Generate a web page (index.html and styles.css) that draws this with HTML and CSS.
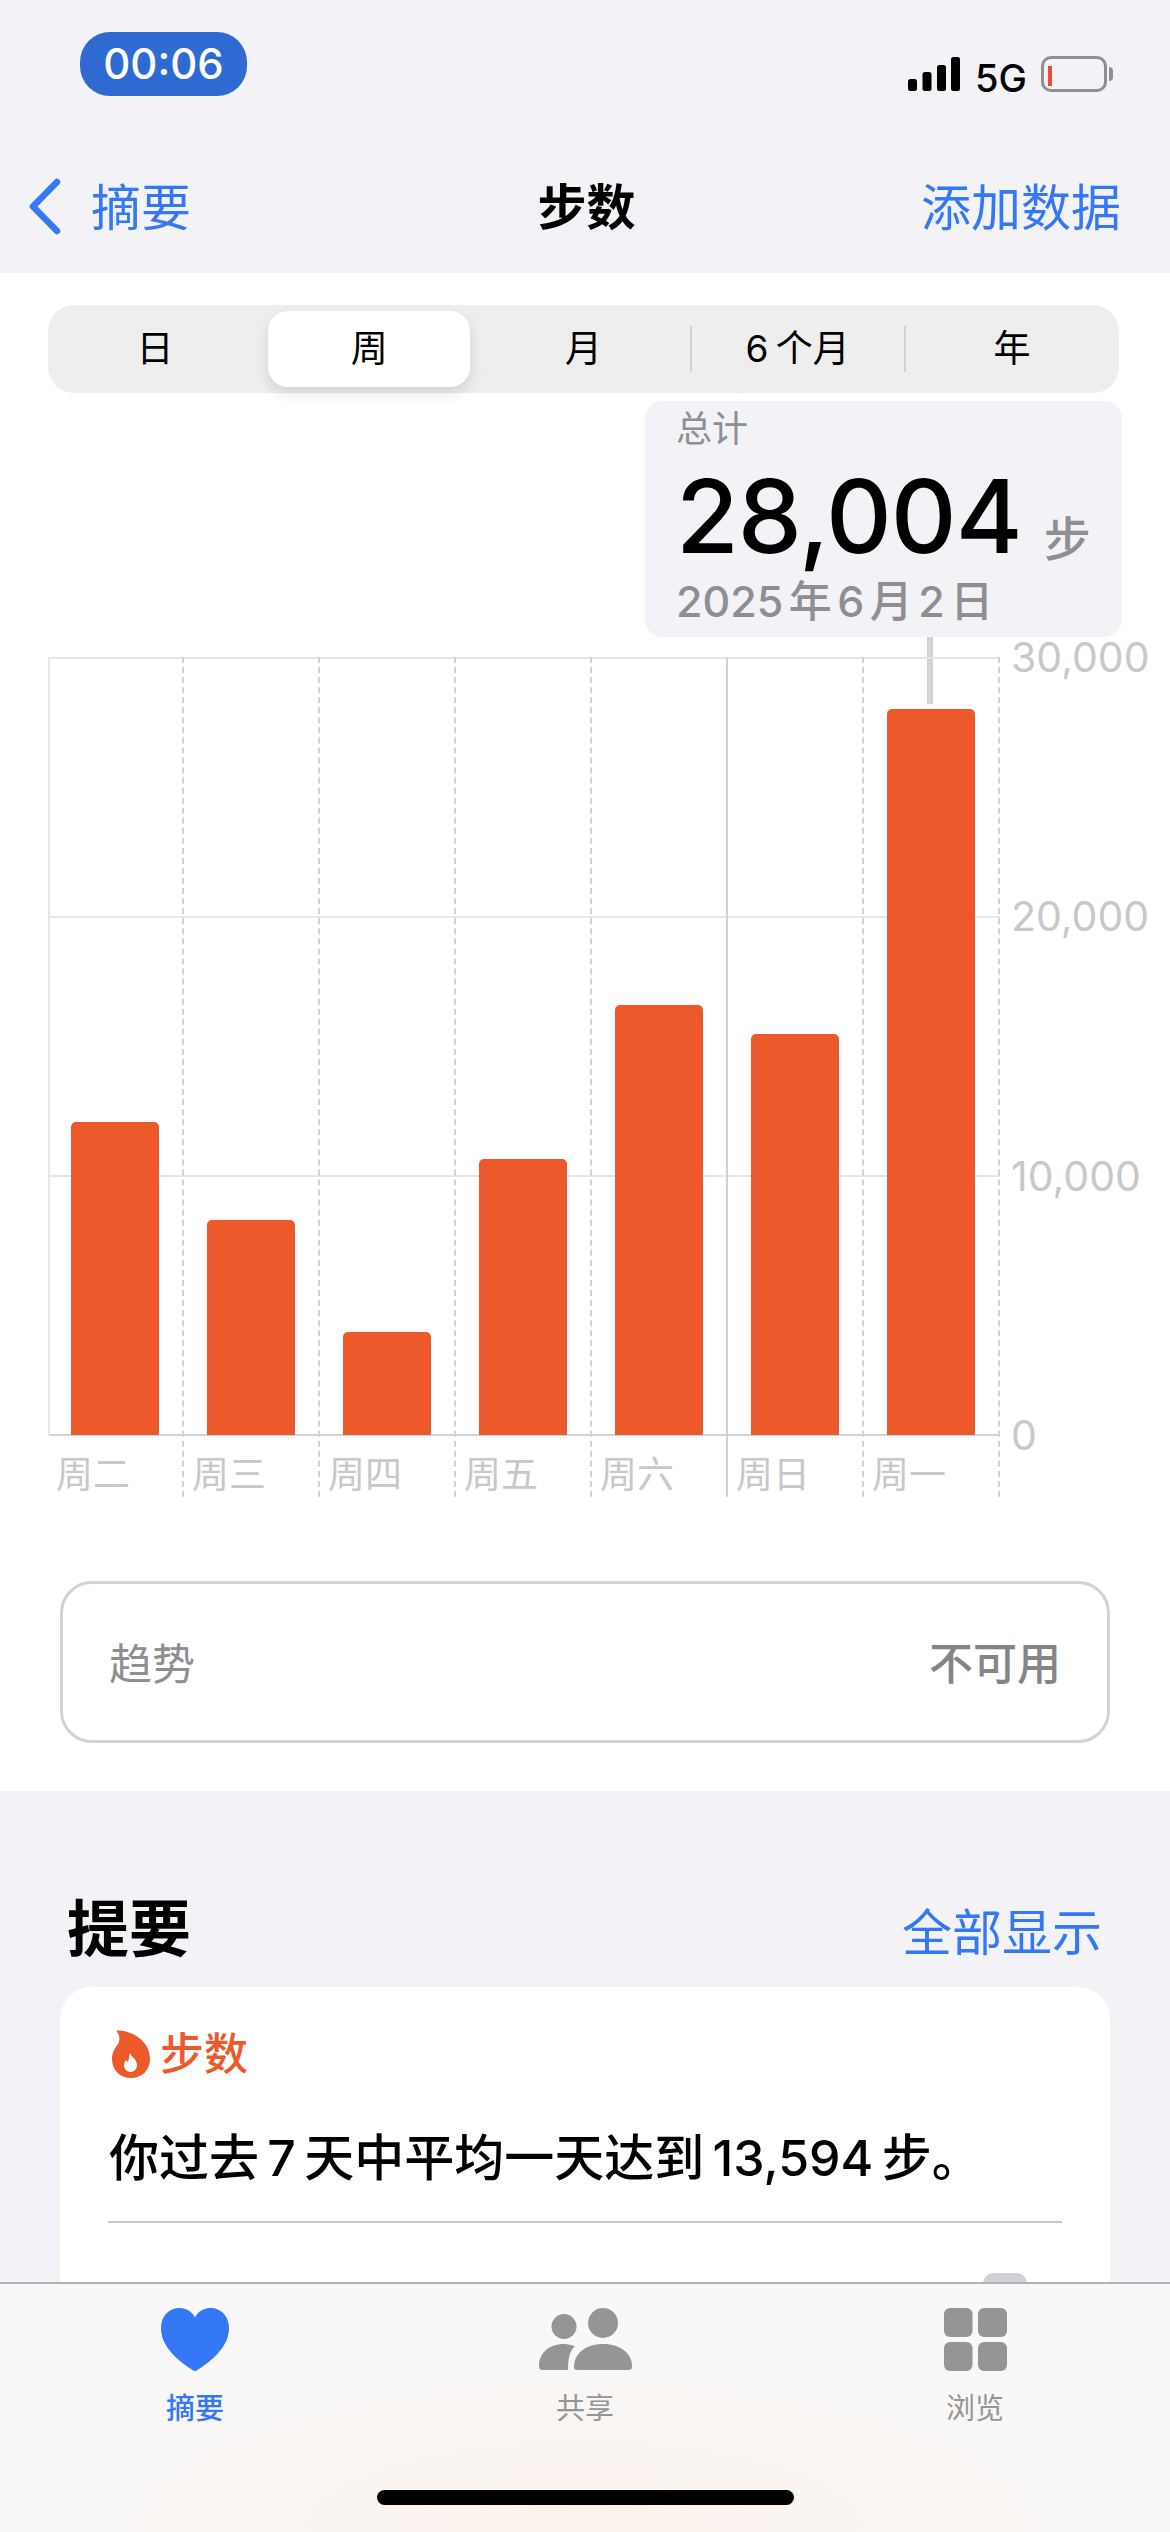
FILE: index.html
```html
<!DOCTYPE html>
<html lang="zh-CN">
<head>
<meta charset="UTF-8" />
<meta name="viewport" content="width=device-width, initial-scale=1" />
<title>步数</title>
<link rel="stylesheet" href="styles.css">
</head>
<body>
<header class="top">
  <div class="status">
    <div class="time-pill">00:06</div>
    <div class="status-right">
      <svg class="signal" width="52" height="34" viewBox="0 0 52 34">
        <rect x="0" y="22" width="9" height="12" rx="2.5" />
        <rect x="14.5" y="15" width="9" height="19" rx="2.5" />
        <rect x="29" y="8" width="9" height="26" rx="2.5" />
        <rect x="43" y="0" width="9" height="34" rx="2.5" />
      </svg>
      <span class="network">5G</span>
      <div class="battery"><div class="battery-level"></div></div>
    </div>
  </div>
  <nav class="nav">
    <a class="nav-back">
      <svg width="33" height="57" viewBox="0 0 33 57"><polyline points="29,4 5,28.5 29,53" fill="none" stroke="#3478f6" stroke-width="6.5" stroke-linecap="round" stroke-linejoin="round" /></svg>
      <span>摘要</span>
    </a>
    <div class="nav-title">步数</div>
    <a class="nav-action">添加数据</a>
  </nav>
</header>

<main class="detail">
  <div class="segments">
    <div class="segment">日</div>
    <div class="segment selected">周</div>
    <div class="segment">月</div>
    <div class="segment divided">6 个月</div>
    <div class="segment divided">年</div>
  </div>

  <div class="callout">
    <div class="callout-label">总计</div>
    <div class="callout-value">28,004<span class="callout-unit">步</span></div>
    <div class="callout-date">2025 年 6 月 2 日</div>
  </div>

  <div class="chart">
    <div class="plot">
      <div class="gridlines"><i></i><i></i><i></i><i></i></div>
      <div class="day">
        <div class="bar-area"><div class="bar" style="height: 313px"></div></div>
        <div class="day-label">周二</div>
      </div>
      <div class="day">
        <div class="bar-area"><div class="bar" style="height: 215px"></div></div>
        <div class="day-label">周三</div>
      </div>
      <div class="day">
        <div class="bar-area"><div class="bar" style="height: 103px"></div></div>
        <div class="day-label">周四</div>
      </div>
      <div class="day">
        <div class="bar-area"><div class="bar" style="height: 276px"></div></div>
        <div class="day-label">周五</div>
      </div>
      <div class="day week-end">
        <div class="bar-area"><div class="bar" style="height: 430px"></div></div>
        <div class="day-label">周六</div>
      </div>
      <div class="day">
        <div class="bar-area"><div class="bar" style="height: 401px"></div></div>
        <div class="day-label">周日</div>
      </div>
      <div class="day">
        <div class="bar-area"><div class="bar" style="height: 726px"></div></div>
        <div class="day-label">周一</div>
      </div>
    </div>
    <div class="y-axis">
      <span>30,000</span>
      <span>20,000</span>
      <span>10,000</span>
      <span>0</span>
    </div>
  </div>

  <div class="trend">
    <span class="trend-label">趋势</span>
    <span class="trend-value">不可用</span>
  </div>
</main>

<section class="highlights">
  <div class="section-head">
    <h2>提要</h2>
    <a>全部显示</a>
  </div>
  <div class="card">
    <div class="card-title">
      <svg width="38" height="48" viewBox="0 0 38 48">
        <path fill="#ec5a2b" d="M6 .5C15 0 38 8 38 29C38 40 30 48 19 48C8 48 0 40 0 29C0 22 3 18 6 14C8 11 8 5 5 2C4.5 1 5 .5 6 .5Z" />
        <path fill="#fff" d="M18 23C19 27 25 29 25 35C25 39 22 42 18.5 42C15 42 12 39 12 35C12 33 13 31 14 30C15 31 15.5 32 16 32C17 29 17 26 18 23Z" />
      </svg>
      <span>步数</span>
    </div>
    <p class="card-text">你过去 7 天中平均一天达到 13,594 步。</p>
    <div class="card-rule"></div>
    <div class="card-thumb"></div>
  </div>
</section>

<footer class="tabbar">
  <div class="tabs">
    <div class="tab active">
      <svg width="68" height="63" viewBox="0 0 68 63">
        <path fill="#3478f6" d="M34 63C33 63 31.5 62 30 61C12 49 0 36 0 20C0 8 8 0 18.5 0C25.5 0 30.8 3.5 34 9.5C37.2 3.5 42.5 0 49.5 0C60 0 68 8 68 20C68 36 56 49 38 61C36.5 62 35 63 34 63Z" />
      </svg>
      <span>摘要</span>
    </div>
    <div class="tab">
      <svg width="93" height="63" viewBox="0 0 93 63">
        <circle cx="25" cy="18.5" r="12.5" fill="#959595" />
        <circle cx="64" cy="15" r="15" fill="#959595" />
        <path fill="#959595" d="M4 62C1 62 0 61 0 58C0 46 9 36 25 36C29 36 33 37 36 38.500C31 42 29 50 29 62Z" />
        <path fill="#959595" d="M38 62C36 62 35 61 35 59C35 46 46 36 64 36C82 36 93 46 93 58C93 61 92 62 89 62Z" />
      </svg>
      <span>共享</span>
    </div>
    <div class="tab">
      <svg width="63" height="63" viewBox="0 0 63 63">
        <rect x="0" y="0" width="28.500" height="29" rx="6" fill="#959595" />
        <rect x="34" y="0" width="29" height="29" rx="6" fill="#959595" />
        <rect x="0" y="34" width="28.500" height="29" rx="6" fill="#959595" />
        <rect x="34" y="34" width="29" height="29" rx="6" fill="#959595" />
      </svg>
      <span>浏览</span>
    </div>
  </div>
  <div class="home-bar"></div>
</footer>
</body>
</html>
```

FILE: styles.css
```css
* {
  box-sizing: border-box;
}
body {
  position: relative;
  width: 1170px;
  height: 2532px;
  margin: 0;
  overflow: hidden;
  background: #f2f2f7;
  color: #000;
  font-family: Inter, "Noto Sans CJK SC", sans-serif;
}

/* status bar + nav */
.top {
  height: 273px;
  background: #f2f2f7;
}
.status {
  display: flex;
  justify-content: space-between;
  height: 178px;
  padding: 32px 63px 0 80px;
}
.time-pill {
  width: 167px;
  height: 64px;
  border-radius: 30px;
  background: #2f69d2;
  color: #fff;
  font-size: 42px;
  font-weight: 500;
  line-height: 64px;
  text-align: center;
}
.status-right {
  display: flex;
  align-items: flex-start;
  padding-top: 24px;
}
.signal {
  margin-top: 1px;
  fill: #000;
}
.network {
  margin-left: 15px;
  font-size: 38px;
  font-weight: 500;
  line-height: 44px;
}
.battery {
  position: relative;
  width: 66px;
  height: 36px;
  margin-left: 14px;
  padding: 7px 4px;
  border: 3px solid #8e8e93;
  border-radius: 10px;
}
.battery::after {
  content: "";
  position: absolute;
  top: 8px;
  right: -9px;
  width: 4px;
  height: 14px;
  border-radius: 0 4px 4px 0;
  background: #8e8e93;
}
.battery-level {
  width: 4px;
  height: 20px;
  background: #f04a36;
}
.nav {
  display: flex;
  align-items: flex-start;
  justify-content: space-between;
  padding: 0 49px 0 28px;
  font-size: 50px;
  line-height: 60px;
}
.nav-back {
  display: flex;
  align-items: flex-start;
  gap: 30px;
  width: 296px;
  color: #3478f6;
}
.nav-title {
  font-size: 49px;
  font-weight: 700;
}
.nav-action {
  width: 272px;
  color: #3478f6;
  text-align: right;
}

/* white detail section */
.detail {
  display: flex;
  flex-direction: column;
  height: 1518px;
  padding-top: 32px;
  background: #fff;
}
.segments {
  display: grid;
  grid-template-columns: repeat(5, 1fr);
  width: 1071px;
  height: 88px;
  margin-left: 48px;
  padding: 6px 0;
  border-radius: 26px;
  background: #eeeeef;
}
.segment {
  position: relative;
  margin: 0 6px;
  font-size: 37px;
  line-height: 76px;
  text-align: center;
  word-spacing: -3px;
}
.segment.selected {
  border-radius: 20px;
  background: #fff;
  box-shadow: 0 6px 14px rgba(0, 0, 0, 0.12);
}
.segment.divided::before {
  content: "";
  position: absolute;
  top: 15px;
  left: -7px;
  width: 2px;
  height: 46px;
  background: #d1d1d6;
}
.callout {
  position: relative;
  width: 477px;
  height: 236px;
  margin: 8px 0 0 645px;
  padding: 6px 30px 0 31px;
  border-radius: 18px;
  background: #f2f2f7;
}
.callout::after {
  content: "";
  position: absolute;
  top: 236px;
  left: 282px;
  width: 6px;
  height: 67px;
  background: #d1d1d6;
}
.callout-label {
  color: #8e8e93;
  font-size: 36px;
  line-height: 44px;
}
.callout-value {
  margin-top: 5px;
  font-size: 102px;
  font-weight: 500;
  line-height: 120px;
  letter-spacing: -1px;
}
.callout-unit {
  margin-left: 22px;
  color: #8e8e93;
  font-size: 47px;
  line-height: 1;
  letter-spacing: 0;
  vertical-align: -3px;
}
.callout-date {
  color: #8e8e93;
  font-size: 43px;
  font-weight: 500;
  line-height: 50px;
  word-spacing: -6px;
}

/* chart */
.chart {
  display: flex;
  margin: 20px 0 0 48px;
}
.plot {
  position: relative;
  display: grid;
  grid-template-columns: repeat(7, 136px);
  width: 952px;
  height: 840px;
}
.gridlines {
  position: absolute;
  top: 0;
  left: 0;
  right: 0;
  display: flex;
  flex-direction: column;
  justify-content: space-between;
  height: 779px;
  border-left: 2px solid #e5e5ea;
}
.gridlines i {
  display: block;
  height: 2px;
  background: #e5e5ea;
}
.gridlines i:last-child {
  background: #d1d1d6;
}
.day {
  position: relative;
  border-right: 2px dashed #d1d1d6;
}
.day.week-end {
  border-right: 2px solid #d1d1d6;
}
.bar-area {
  display: flex;
  align-items: flex-end;
  height: 778px;
  padding-left: 23px;
}
.bar {
  width: 88px;
  border-radius: 5px 5px 0 0;
  background: #ec5a2b;
}
.day-label {
  height: 62px;
  padding: 17px 0 0 8px;
  color: #c7c7cc;
  font-size: 37px;
  line-height: 45px;
}
.y-axis {
  display: flex;
  flex-direction: column;
  justify-content: space-between;
  height: 818px;
  margin: -20px 0 0 11px;
  color: #c7c7cc;
  font-size: 41px;
  line-height: 40px;
}

/* trend card */
.trend {
  display: flex;
  align-items: center;
  justify-content: space-between;
  width: 1050px;
  height: 162px;
  margin: 84px 0 0 60px;
  padding: 0 46px 3px 46px;
  border: 3px solid #d1d1d6;
  border-radius: 32px;
  font-size: 43px;
}
.trend-label {
  color: #8e8e93;
}
.trend-value {
  color: #858589;
  font-size: 44px;
  font-weight: 500;
}

/* highlights */
.highlights {
  padding-top: 103px;
}
.section-head {
  display: flex;
  align-items: center;
  justify-content: space-between;
  height: 70px;
  padding: 0 68px 0 67px;
}
.section-head h2 {
  margin: 0;
  padding-bottom: 8px;
  font-size: 62px;
  font-weight: 700;
}
.section-head a {
  color: #3478f6;
  font-size: 50px;
}
.card {
  display: flex;
  flex-direction: column;
  width: 1050px;
  height: 545px;
  margin: 23px 0 0 60px;
  padding: 43px 48px 0;
  border-radius: 32px 32px 0 0;
  background: #fff;
}
.card-title {
  display: flex;
  align-items: center;
  gap: 10px;
  padding-left: 4px;
  color: #ec5a2b;
  font-size: 44px;
  font-weight: 500;
  line-height: 48px;
}
.card-text {
  margin: 50px 0 0;
  padding-left: 1px;
  font-size: 50px;
  font-weight: 500;
  line-height: 60px;
  word-spacing: -5px;
}
.card-rule {
  height: 2px;
  margin-top: 33px;
  background: #c8c8cc;
}
.card-thumb {
  align-self: flex-end;
  width: 44px;
  height: 40px;
  margin: 50px 35px 0 0;
  border-radius: 10px;
  background: #d1d1d6;
}

/* tab bar */
.tabbar {
  position: absolute;
  left: 0;
  right: 0;
  bottom: 0;
  height: 250px;
  border-top: 2px solid #b2b2b6;
  background: radial-gradient(ellipse 620px 200px at 50% 100%, #fbf2ec, #f8f8f8 100%);
}
.tabs {
  display: grid;
  grid-template-columns: repeat(3, 390px);
  padding-top: 24px;
}
.tab {
  display: flex;
  flex-direction: column;
  align-items: center;
  color: #959595;
  font-size: 29px;
  line-height: 40px;
}
.tab span {
  margin-top: 18px;
}
.tab.active {
  color: #3478f6;
  font-weight: 500;
}
.home-bar {
  width: 417px;
  height: 15px;
  margin: 61px auto 0;
  border-radius: 8px;
  background: #000;
}
```
